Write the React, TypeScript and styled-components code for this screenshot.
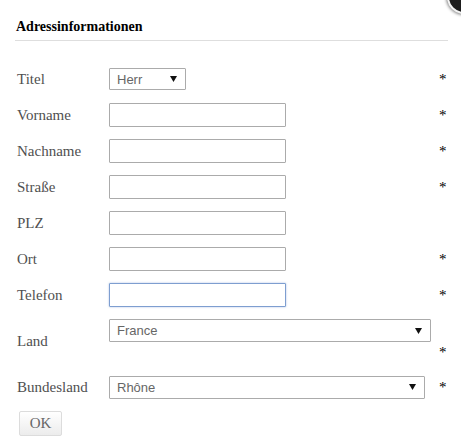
import React from 'react';
import styled, { createGlobalStyle, css } from 'styled-components';

const GlobalStyle = createGlobalStyle`
  html, body {
    margin: 0;
    padding: 0;
    background: #fff;
  }
  body {
    font-family: 'Liberation Serif', 'Times New Roman', serif;
  }
`;

const Page = styled.div`
  position: relative;
  width: 461px;
  height: 440px;
  overflow: hidden;
  padding: 19px 0 0 15px;
  box-sizing: border-box;
`;

const CloseKnob = styled.div`
  position: absolute;
  top: -20px;
  right: -20px;
  width: 30px;
  height: 30px;
  border-radius: 50%;
  background: #1d1d1d;
  border: 2px solid #f4f4f4;
  box-shadow: 0 0 3px 1px rgba(0, 0, 0, 0.45);
`;

const Heading = styled.h2`
  width: 433px;
  margin: 0;
  padding: 0 0 5px 1px;
  box-sizing: border-box;
  font-size: 14px;
  line-height: 16px;
  font-weight: bold;
  color: #000;
  border-bottom: 1px solid #dedede;
`;

const Form = styled.form`
  margin: 20px 0 0 2px;
  display: flex;
  flex-direction: column;
`;

const Row = styled.div<{ $height?: number }>`
  display: grid;
  grid-template-columns: 92px 330px auto;
  align-items: center;
  height: ${(p) => p.$height ?? 36}px;
`;

const Label = styled.label`
  font-size: 15px;
  line-height: 18px;
  color: #505050;
`;

const Control = styled.div<{ $top?: number }>`
  display: flex;
  align-items: center;
  ${(p) =>
    p.$top !== undefined &&
    css`
      align-self: start;
      margin-top: ${p.$top}px;
    `}
`;

const Required = styled.span<{ $bottom?: number }>`
  font-size: 15px;
  line-height: 16px;
  color: #000;
  ${(p) =>
    p.$bottom !== undefined &&
    css`
      align-self: end;
      margin-bottom: ${p.$bottom}px;
    `}
`;

const TextInput = styled.input<{ $focused?: boolean }>`
  width: 177px;
  height: 24px;
  box-sizing: border-box;
  margin: 0;
  padding: 2px 6px;
  border: 1px solid ${(p) => (p.$focused ? '#7e9ed0' : '#ababab')};
  border-radius: 1px;
  background: #fff;
  font-family: 'Liberation Sans', Arial, sans-serif;
  font-size: 13px;
  outline: none;
  ${(p) =>
    p.$focused &&
    css`
      box-shadow: 0 0 2px rgba(90, 130, 200, 0.55);
    `}
`;

const SelectWrap = styled.div<{ $width: number; $height: number }>`
  position: relative;
  width: ${(p) => p.$width}px;
  height: ${(p) => p.$height}px;
`;

const Select = styled.select`
  appearance: none;
  -webkit-appearance: none;
  width: 100%;
  height: 100%;
  box-sizing: border-box;
  margin: 0;
  padding: 0 20px 0 7px;
  border: 1px solid #ababab;
  border-radius: 1px;
  background: #fff;
  color: #666;
  font-family: 'Liberation Sans', Arial, sans-serif;
  font-size: 13px;
  outline: none;
`;

const Arrow = styled.svg`
  position: absolute;
  right: 9px;
  top: 50%;
  margin-top: -3px;
  width: 7px;
  height: 6px;
  pointer-events: none;
`;

const Button = styled.button`
  align-self: flex-start;
  margin: 6px 0 0 2px;
  width: 43px;
  height: 25px;
  padding: 0;
  border: 1px solid #dcdcdc;
  border-radius: 2px;
  background: linear-gradient(#ffffff, #ececec);
  color: #666;
  font-family: 'Liberation Serif', 'Times New Roman', serif;
  font-size: 15px;
`;

const Dropdown: React.FC<{ width: number; height: number; value: string; options: string[] }> = ({
  width,
  height,
  value,
  options,
}) => (
  <SelectWrap $width={width} $height={height}>
    <Select defaultValue={value}>
      {options.map((o) => (
        <option key={o}>{o}</option>
      ))}
    </Select>
    <Arrow viewBox="0 0 7 6">
      <path d="M0 0 H7 L3.5 6 Z" fill="#111" />
    </Arrow>
  </SelectWrap>
);

const fields = [
  { label: 'Vorname', required: true },
  { label: 'Nachname', required: true },
  { label: 'Straße', required: true },
  { label: 'PLZ', required: false },
  { label: 'Ort', required: true },
  { label: 'Telefon', required: true, focused: true },
];

const App: React.FC = () => (
  <>
    <GlobalStyle />
    <Page>
      <CloseKnob />
      <Heading>Adressinformationen</Heading>
      <Form onSubmit={(e) => e.preventDefault()}>
        <Row>
          <Label>Titel</Label>
          <Control>
            <Dropdown width={77} height={22} value="Herr" options={['Herr', 'Frau']} />
          </Control>
          <Required>*</Required>
        </Row>
        {fields.map((f) => (
          <Row key={f.label}>
            <Label>{f.label}</Label>
            <Control>
              <TextInput type="text" $focused={f.focused} />
            </Control>
            {f.required ? <Required>*</Required> : <span />}
          </Row>
        ))}
        <Row $height={56}>
          <Label>Land</Label>
          <Control $top={6}>
            <Dropdown width={322} height={23} value="France" options={['France', 'Deutschland']} />
          </Control>
          <Required $bottom={9}>*</Required>
        </Row>
        <Row>
          <Label>Bundesland</Label>
          <Control>
            <Dropdown width={316} height={23} value="Rhône" options={['Rhône', 'Isère']} />
          </Control>
          <Required>*</Required>
        </Row>
        <Button type="submit">OK</Button>
      </Form>
    </Page>
  </>
);

export default App;
